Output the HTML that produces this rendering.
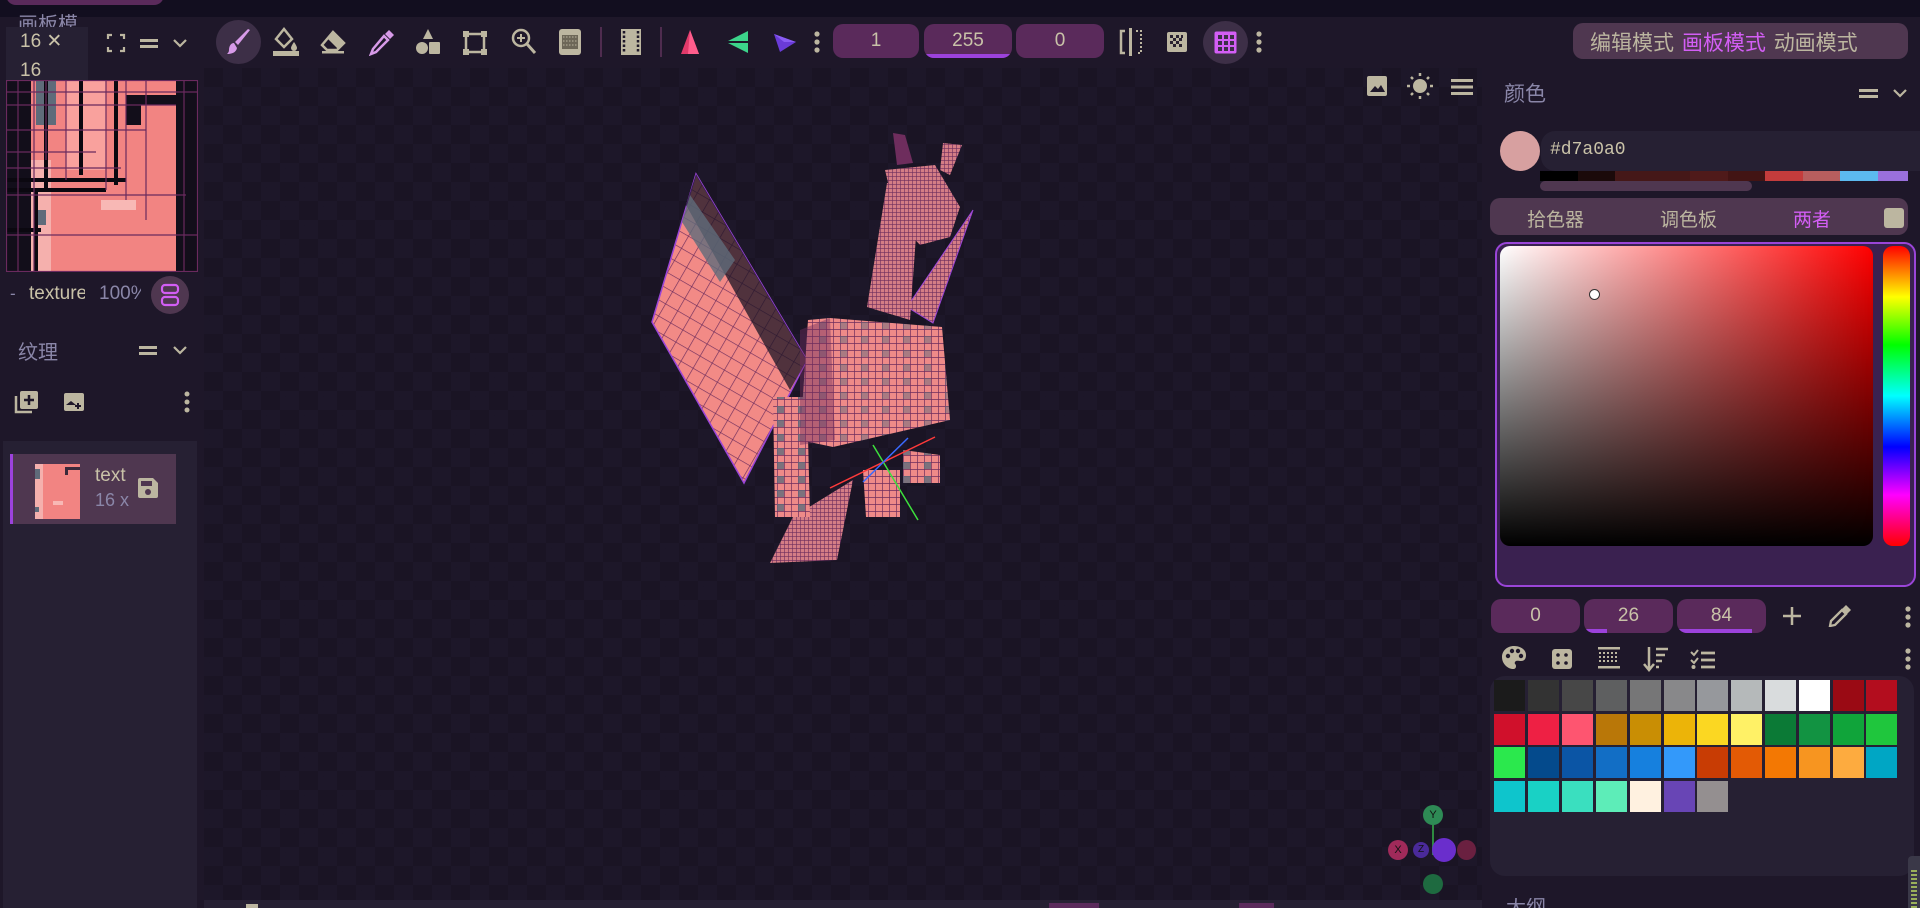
<!DOCTYPE html>
<html><head><meta charset="utf-8">
<style>
*{margin:0;padding:0;box-sizing:border-box}
body{width:1920px;height:908px;overflow:hidden;background:#1e1729;font-family:"Liberation Sans","Noto Sans CJK SC",sans-serif;color:#bcb6a0;position:relative}
.a{position:absolute}
.cj{font-family:"Liberation Sans","Noto Sans CJK SC",sans-serif}
.num{position:absolute;background:#5a2a5b;border-radius:10px;color:#c9c2a8;font-size:19px;text-align:center;overflow:hidden}
.num i{position:absolute;left:0;bottom:0;height:4px;background:#9c42dc}
.ic{position:absolute}
.sw{position:absolute;width:31px;height:31px}
</style></head><body>
<div class="a" style="left:0;top:0;width:1920px;height:17px;background:#120e1f"></div>
<div class="a" style="left:6px;top:-10px;width:158px;height:15px;background:#5a2a5b;border-radius:0 0 10px 10px"></div>
<div class="a" style="left:0;top:17px;width:198px;height:891px;background:#1e1729"></div>
<div class="a cj" style="left:18px;top:10px;font-size:20px;color:#8a86a8;height:17px;overflow:hidden;line-height:30px">画板模</div>
<div class="a" style="left:6px;top:27px;width:82px;height:53px;background:#262033"></div>
<div class="a" style="left:20px;top:30px;font-size:19px;color:#c9c2a8">16 ✕</div>
<div class="a" style="left:20px;top:60px;font-size:19px;color:#c9c2a8">16</div>
<svg class="ic" style="left:106px;top:33px" width="88" height="20" viewBox="0 0 88 20"><path d="M2 6V2h4M14 2h4v4M18 14v4h-4M6 18H2v-4" stroke="#bcb6a0" stroke-width="2.2" fill="none"/><rect x="34" y="6" width="18" height="3" fill="#bcb6a0"/><rect x="34" y="12" width="18" height="3" fill="#bcb6a0"/><path d="M68 7l6 6 6-6" stroke="#bcb6a0" stroke-width="2.2" fill="none"/></svg>
<svg class="a" style="left:6px;top:80px" width="192" height="192" viewBox="0 0 192 192">
<rect width="192" height="192" fill="#120e1a"/>
<rect x="25" y="0" width="145" height="192" fill="#f28482"/>
<rect x="30" y="0" width="20" height="45" fill="#5f6b7a"/>
<rect x="60" y="0" width="40" height="90" fill="#f9a19d"/>
<rect x="120" y="15" width="50" height="30" fill="#120e1a"/>
<rect x="135" y="25" width="35" height="20" fill="#f28482"/>
<rect x="170" y="0" width="22" height="192" fill="#120e1a"/>
<rect x="0" y="0" width="25" height="192" fill="#120e1a"/>
<rect x="25" y="80" width="20" height="112" fill="#f5b0ad"/>
<rect x="28" y="130" width="12" height="15" fill="#5f6b7a"/>
<rect x="95" y="120" width="35" height="10" fill="#f8b8b5"/>
<path d="M40 0v110M75 0v95M110 0v105M0 100h120M0 110h100M0 150h35M30 110v82" stroke="#0b0810" stroke-width="4" fill="none"/>
<g stroke="#6a2a5e" stroke-width="1.2" fill="none"><rect x="0.5" y="0.5" width="191" height="191"/><path d="M0 12h192M0 25h170M0 50h140M0 72h90M0 88h115M0 115h180M0 155h192M12 0v192M28 0v192M40 0v80M60 0v100M100 0v110M120 0v120M140 0v140M178 0v192"/></g>
</svg>
<div class="a" style="left:10px;top:284px;font-size:17px;color:#8a86a8">-</div>
<div class="a" style="left:29px;top:283px;font-size:19px;color:#c9c2a8;width:56px;overflow:hidden;white-space:nowrap">texture</div>
<div class="a" style="left:99px;top:283px;font-size:19px;color:#8a86a8;width:42px;overflow:hidden;white-space:nowrap">100%</div>
<div class="a" style="left:151px;top:276px;width:38px;height:38px;border-radius:50%;background:#4f3750"></div>
<svg class="ic" style="left:160px;top:283px" width="20" height="24"><rect x="2" y="2" width="16" height="8" rx="3" stroke="#d35ef5" stroke-width="2.2" fill="none"/><rect x="2" y="14" width="16" height="8" rx="3" stroke="#d35ef5" stroke-width="2.2" fill="none"/></svg>
<div class="a cj" style="left:18px;top:336px;font-size:20px;color:#8a86a8">纹理</div>
<svg class="ic" style="left:138px;top:340px" width="52" height="20"><rect x="1" y="6" width="18" height="3" fill="#bcb6a0"/><rect x="1" y="12" width="18" height="3" fill="#bcb6a0"/><path d="M36 7l6 6 6-6" stroke="#bcb6a0" stroke-width="2.2" fill="none"/></svg>
<svg class="ic" style="left:14px;top:390px" width="26" height="24"><path d="M2 6v16h16" stroke="#bcb6a0" stroke-width="2.5" fill="none"/><rect x="6" y="1" width="18" height="18" rx="2" fill="#bcb6a0"/><path d="M15 5v10M10 10h10" stroke="#1e1729" stroke-width="2.5"/></svg>
<svg class="ic" style="left:63px;top:392px" width="22" height="20"><rect x="1" y="1" width="20" height="18" rx="2" fill="#bcb6a0"/><path d="M3 13l5-4 5 4" fill="#1e1729"/><path d="M15 11v6M12 14h6" stroke="#1e1729" stroke-width="2"/></svg>
<svg class="ic" style="left:184px;top:391px" width="6" height="22"><circle cx="3" cy="3" r="2.5" fill="#bcb6a0"/><circle cx="3" cy="11" r="2.5" fill="#bcb6a0"/><circle cx="3" cy="19" r="2.5" fill="#bcb6a0"/></svg>
<div class="a" style="left:3px;top:441px;width:194px;height:467px;background:#262033"></div>
<div class="a" style="left:10px;top:454px;width:166px;height:70px;background:#4f3750;border-left:3px solid #9c42dc"></div>
<svg class="a" style="left:35px;top:464px" width="45" height="55"><rect width="45" height="55" fill="#f28482"/><rect x="0" y="0" width="8" height="55" fill="#f5b0ad"/><rect x="0" y="5" width="5" height="10" fill="#5f6b7a"/><rect x="30" y="3" width="15" height="3" fill="#3b2a3a"/><rect x="30" y="3" width="3" height="8" fill="#3b2a3a"/><rect x="18" y="37" width="10" height="4" fill="#f8b8b5"/><rect x="0" y="43" width="4" height="5" fill="#5f6b7a"/></svg>
<div class="a" style="left:95px;top:465px;font-size:19px;color:#c9c2a8">text</div>
<div class="a" style="left:95px;top:490px;font-size:18px;color:#8a86a8">16 x</div>
<svg class="ic" style="left:137px;top:477px" width="22" height="22"><path d="M1 3a2 2 0 0 1 2-2h13l5 5v13a2 2 0 0 1-2 2H3a2 2 0 0 1-2-2z" fill="#bcb6a0"/><rect x="4" y="4" width="11" height="5" fill="#4f3750"/><circle cx="11" cy="15" r="3" fill="#4f3750"/></svg>

<div class="a" style="left:198px;top:17px;width:1284px;height:51px;background:#1e1729"></div>
<div class="a" style="left:216px;top:20px;width:45px;height:44px;border-radius:50%;background:#3d2f47"></div>
<svg class="ic" style="left:226px;top:28px" width="26" height="28"><path d="M24 2L12 17l-3-3L22 1z" fill="#d79ae8"/><path d="M8 15c-3 0-5 3-5 7 0 2-1 3-2 4 4 0 9-1 10-6z" fill="#d79ae8"/></svg>
<svg class="ic" style="left:272px;top:27px" width="28" height="30"><path d="M12 2l-8 10 8 8 8-8z" fill="none" stroke="#bcb6a0" stroke-width="2.5"/><path d="M22 15c0 0-3 4-3 6a3 3 0 0 0 6 0c0-2-3-6-3-6z" fill="#bcb6a0"/><rect x="1" y="24" width="26" height="5" fill="#bcb6a0"/></svg>
<svg class="ic" style="left:320px;top:30px" width="26" height="24"><path d="M13 2l11 11-7 7H7L2 15z" fill="none" stroke="#bcb6a0" stroke-width="2.5"/><path d="M13 2l11 11-6 6-11-11z" fill="#bcb6a0"/><rect x="2" y="21" width="22" height="2.5" fill="#bcb6a0"/></svg>
<svg class="ic" style="left:369px;top:28px" width="26" height="28"><path d="M20 2l5 5-4 4-5-5z" fill="#d79ae8"/><path d="M15 8l4 4L7 24l-5 2 2-5z" fill="none" stroke="#d79ae8" stroke-width="2.5"/></svg>
<svg class="ic" style="left:415px;top:28px" width="26" height="28"><path d="M13 1l5 10H8z" fill="#bcb6a0"/><circle cx="7" cy="20" r="6" fill="#bcb6a0"/><rect x="14" y="14" width="11" height="12" rx="1" fill="#bcb6a0"/></svg>
<svg class="ic" style="left:462px;top:30px" width="26" height="26"><rect x="4" y="4" width="18" height="18" fill="none" stroke="#bcb6a0" stroke-width="2.5"/><rect x="1" y="1" width="6" height="6" fill="#bcb6a0"/><rect x="19" y="1" width="6" height="6" fill="#bcb6a0"/><rect x="1" y="19" width="6" height="6" fill="#bcb6a0"/><rect x="19" y="19" width="6" height="6" fill="#bcb6a0"/></svg>
<svg class="ic" style="left:511px;top:28px" width="26" height="28"><circle cx="10" cy="10" r="8" fill="none" stroke="#bcb6a0" stroke-width="2.5"/><path d="M10 6v8M6 10h8" stroke="#bcb6a0" stroke-width="2"/><path d="M16 16l8 9" stroke="#bcb6a0" stroke-width="3"/></svg>
<svg class="ic" style="left:558px;top:28px" width="24" height="28"><rect x="1" y="1" width="22" height="26" rx="3" fill="#bcb6a0"/><rect x="4" y="7" width="16" height="14" fill="#6d6758"/><path d="M5 9h14M5 13h14M5 17h14" stroke="#bcb6a0" stroke-width="1" stroke-dasharray="1.5 1.5"/></svg>
<div class="a" style="left:600px;top:27px;width:2px;height:30px;background:#4f2c4f"></div>
<svg class="ic" style="left:620px;top:28px" width="22" height="28"><rect x="1" y="1" width="20" height="26" fill="#bcb6a0"/><path d="M4 3v22M18 3v22" stroke="#1e1729" stroke-width="2.5" stroke-dasharray="2.5 2"/><rect x="7" y="2" width="8" height="24" fill="#bcb6a0"/></svg>
<div class="a" style="left:660px;top:27px;width:2px;height:30px;background:#4f2c4f"></div>
<svg class="ic" style="left:678px;top:28px" width="24" height="28"><path d="M12 2L3 26h18z" fill="#e13a6a"/><path d="M12 2L10 26h11z" fill="#ff5d8c"/></svg>
<svg class="ic" style="left:724px;top:30px" width="26" height="24"><path d="M24 1L2 12l22 11z" fill="#3cd48a"/><path d="M24 12H2" stroke="#1e1729" stroke-width="2"/></svg>
<svg class="ic" style="left:772px;top:30px" width="26" height="24"><path d="M2 4l22 8-16 10z" fill="#6a3bd8"/><path d="M2 4l22 8-12 0z" fill="#8a5cf4"/></svg>
<svg class="ic" style="left:814px;top:30px" width="6" height="24"><circle cx="3" cy="4" r="2.6" fill="#bcb6a0"/><circle cx="3" cy="12" r="2.6" fill="#bcb6a0"/><circle cx="3" cy="20" r="2.6" fill="#bcb6a0"/></svg>
<div class="num" style="left:833px;top:24px;width:86px;height:34px;line-height:34px">1</div>
<div class="num" style="left:924px;top:24px;width:88px;height:34px;line-height:34px">255<i style="width:100%"></i></div>
<div class="num" style="left:1016px;top:24px;width:88px;height:34px;line-height:34px">0</div>
<svg class="ic" style="left:1118px;top:28px" width="26" height="28"><path d="M7 3H3v22h4" stroke="#bcb6a0" stroke-width="2.5" fill="none"/><rect x="11" y="0" width="3" height="28" fill="#bcb6a0"/><path d="M18 3h5v22h-5" stroke="#bcb6a0" stroke-width="2" stroke-dasharray="2 2" fill="none"/></svg>
<svg class="ic" style="left:1166px;top:31px" width="22" height="22"><rect x="1" y="1" width="20" height="20" rx="2" fill="#bcb6a0"/><g fill="#2a2230"><rect x="4" y="4" width="3" height="3"/><rect x="10" y="4" width="3" height="3"/><rect x="7" y="7" width="3" height="3"/><rect x="13" y="7" width="3" height="3"/><rect x="4" y="10" width="3" height="3"/><rect x="10" y="10" width="3" height="3"/><rect x="7" y="13" width="3" height="3"/><rect x="13" y="13" width="3" height="3"/><rect x="15" y="4" width="2" height="3"/></g></svg>
<div class="a" style="left:1203px;top:21px;width:45px;height:43px;border-radius:50%;background:#3d2f47"></div>
<svg class="ic" style="left:1213px;top:30px" width="25" height="25"><rect x="1.5" y="1.5" width="22" height="22" rx="2" fill="#d35ef5"/><g fill="#3d2f47"><rect x="5" y="5" width="4" height="4"/><rect x="11" y="5" width="4" height="4"/><rect x="17" y="5" width="4" height="4"/><rect x="5" y="11" width="4" height="4"/><rect x="11" y="11" width="4" height="4"/><rect x="17" y="11" width="4" height="4"/><rect x="5" y="17" width="4" height="4"/><rect x="11" y="17" width="4" height="4"/><rect x="17" y="17" width="4" height="4"/></g></svg>
<svg class="ic" style="left:1256px;top:30px" width="6" height="24"><circle cx="3" cy="4" r="2.6" fill="#bcb6a0"/><circle cx="3" cy="12" r="2.6" fill="#bcb6a0"/><circle cx="3" cy="20" r="2.6" fill="#bcb6a0"/></svg>

<div class="a" style="left:204px;top:68px;width:1278px;height:832px;background-color:#1a1424;background-image:linear-gradient(45deg,#1d1729 25%,transparent 25%,transparent 75%,#1d1729 75%),linear-gradient(45deg,#1d1729 25%,transparent 25%,transparent 75%,#1d1729 75%);background-size:38px 38px;background-position:0 0,19px 19px"></div>
<svg class="ic" style="left:1366px;top:75px" width="22" height="22"><rect x="1" y="1" width="20" height="20" rx="2" fill="#bcb6a0"/><path d="M4 17l5-6 3 3 3-4 4 7z" fill="#1e1729"/></svg>
<svg class="ic" style="left:1407px;top:73px" width="26" height="26"><circle cx="13" cy="13" r="7" fill="#bcb6a0"/><g stroke="#bcb6a0" stroke-width="2.5"><path d="M13 0v3M13 23v3M0 13h3M23 13h3M4 4l2 2M20 20l2 2M4 22l2-2M20 6l2-2"/></g></svg>
<svg class="ic" style="left:1451px;top:78px" width="22" height="18"><rect y="1" width="22" height="3" fill="#bcb6a0"/><rect y="7.5" width="22" height="3" fill="#bcb6a0"/><rect y="14" width="22" height="3" fill="#bcb6a0"/></svg>

<svg class="a" style="left:620px;top:120px" width="420" height="460" viewBox="620 120 420 460">
<defs>
<pattern id="g" width="7" height="7" patternUnits="userSpaceOnUse"><rect width="7" height="7" fill="#ee8a88"/><path d="M0 0h7M0 0v7" stroke="#6e2d5d" stroke-width="1.4"/></pattern>
<pattern id="g2" width="4" height="4" patternUnits="userSpaceOnUse"><rect width="4" height="4" fill="#d47d85"/><path d="M0 0h4M0 0v4" stroke="#6e2d5d" stroke-width="1.2"/></pattern>
<pattern id="w" width="14" height="14" patternUnits="userSpaceOnUse" patternTransform="rotate(30)"><rect width="14" height="14" fill="#f28a86"/><path d="M0 0h14M0 0v14" stroke="#6e2d5d" stroke-width="1.3"/></pattern>
<pattern id="t" width="21" height="14" patternUnits="userSpaceOnUse"><rect width="21" height="14" fill="none"/><rect x="0" y="0" width="7" height="7" fill="#5f6b7a" opacity="0.8"/></pattern>
</defs>
<polygon points="696,174 652,322 744,483 807,360" fill="url(#w)" stroke="#9b45d8" stroke-width="1.5"/>
<polygon points="696,174 686,205 790,390 807,360" fill="#1a1424" opacity="0.75"/>
<polygon points="690,195 682,222 720,282 735,260" fill="#5f6b7a" opacity="0.8"/>
<polygon points="907,307 973,210 933,323" fill="url(#g2)" stroke="#9b45d8" stroke-width="1"/>
<polygon points="770,563 793,517 853,480 837,560" fill="url(#g2)"/>
<polygon points="773,397 807,397 810,517 775,517" fill="url(#g)"/>
<polygon points="773,397 807,397 810,517 775,517" fill="url(#t)"/>
<polygon points="867,307 887,183 920,180 910,320" fill="url(#g2)"/>
<polygon points="885,170 935,165 960,207 950,237 920,245 897,220" fill="url(#g2)"/>
<polygon points="893,133 905,135 913,163 897,165" fill="#6e2d5d"/>
<polygon points="943,143 962,145 950,175 940,170" fill="url(#g2)"/>
<polygon points="808,320 830,318 942,327 950,420 833,447 800,440" fill="url(#g)"/>
<polygon points="808,320 830,318 942,327 950,420 833,447 800,440" fill="url(#t)" opacity="0.6"/>
<polygon points="800,330 830,318 835,440 800,445" fill="#6e2d5d" opacity="0.45"/>
<polygon points="863,470 900,470 900,517 866,517" fill="url(#g)"/>
<polygon points="903,450 940,455 940,483 903,483" fill="url(#g)"/>
<polygon points="903,450 940,455 940,483 903,483" fill="url(#t)"/>
<line x1="873" y1="445" x2="918" y2="520" stroke="#3de03d" stroke-width="1.5"/>
<line x1="830" y1="488" x2="935" y2="437" stroke="#ff3a3a" stroke-width="1.5"/>
<line x1="863" y1="482" x2="908" y2="438" stroke="#3a6aff" stroke-width="1.5"/>
</svg>

<div class="a" style="left:1432px;top:825px;width:2px;height:30px;background:#2e8a40"></div>
<div class="a" style="left:1423px;top:805px;width:20px;height:20px;border-radius:50%;background:#2e8a55;font-size:11px;color:#111;text-align:center;line-height:20px">Y</div>
<div class="a" style="left:1388px;top:840px;width:20px;height:20px;border-radius:50%;background:#a02a5a;font-size:11px;color:#111;text-align:center;line-height:20px">X</div>
<div class="a" style="left:1413px;top:842px;width:16px;height:16px;border-radius:50%;background:#4a2a9a;font-size:10px;color:#111;text-align:center;line-height:16px">Z</div>
<div class="a" style="left:1432px;top:838px;width:24px;height:24px;border-radius:50%;background:#6a2ecc"></div>
<div class="a" style="left:1457px;top:840px;width:19px;height:20px;border-radius:50%;background:#6a2040"></div>
<div class="a" style="left:1423px;top:874px;width:20px;height:20px;border-radius:50%;background:#1e6a40"></div>
<div class="a" style="left:204px;top:900px;width:1278px;height:8px;background:#262033"></div>
<div class="a" style="left:246px;top:904px;width:12px;height:4px;background:#bcb6a0"></div>
<div class="a" style="left:1049px;top:903px;width:50px;height:5px;background:#5a2a5b"></div>
<div class="a" style="left:1239px;top:903px;width:35px;height:5px;background:#5a2a5b"></div>

<div class="a" style="left:1482px;top:17px;width:438px;height:891px;background:#1e1729"></div>
<div class="a" style="left:1573px;top:23px;width:335px;height:36px;background:#4f3750;border-radius:10px"></div>
<div class="a cj" style="left:1590px;top:27px;font-size:21px;color:#bcb6a0;white-space:nowrap">编辑模式 <span style="color:#d35ef5;margin-left:2px">画板模式</span> <span style="margin-left:2px">动画模式</span></div>
<div class="a cj" style="left:1504px;top:78px;font-size:21px;color:#8a86a8">颜色</div>
<svg class="ic" style="left:1858px;top:84px" width="52" height="20"><rect x="1" y="5" width="19" height="3" fill="#bcb6a0"/><rect x="1" y="11" width="19" height="3" fill="#bcb6a0"/><path d="M36 6l6 6 6-6" stroke="#bcb6a0" stroke-width="2.2" fill="none"/></svg>
<div class="a" style="left:1500px;top:131px;width:40px;height:40px;border-radius:50%;background:#d7a0a0"></div>
<div class="a" style="left:1541px;top:131px;width:379px;height:40px;background:#262033;border-radius:14px 0 0 14px"></div>
<div class="a" style="left:1550px;top:140px;font-family:'Liberation Mono',monospace;font-size:18px;color:#c9c2a8">#d7a0a0</div>
<div class="a" style="left:1540px;top:171px;width:368px;height:10px;display:flex">
<div style="flex:38;background:#000"></div><div style="flex:37;background:#1b0a0a"></div><div style="flex:75;background:#451818"></div><div style="flex:38;background:#4f1a1a"></div><div style="flex:37;background:#421414"></div><div style="flex:38;background:#c43c3c"></div><div style="flex:37;background:#b85e5e"></div><div style="flex:38;background:#5cbaf0"></div><div style="flex:30;background:#9a70dc"></div></div>
<div class="a" style="left:1540px;top:181px;width:212px;height:10px;background:#4f3750;border-radius:5px"></div>
<div class="a" style="left:1490px;top:198px;width:418px;height:37px;background:#4f3750;border-radius:10px"></div>
<div class="a cj" style="left:1527px;top:205px;font-size:19px;color:#bcb6a0">拾色器</div>
<div class="a cj" style="left:1660px;top:205px;font-size:19px;color:#bcb6a0">调色板</div>
<div class="a cj" style="left:1793px;top:205px;font-size:19px;color:#d35ef5">两者</div>
<div class="a" style="left:1884px;top:208px;width:20px;height:20px;background:#bcb6a0;border-radius:3px"></div>
<div class="a" style="left:1495px;top:242px;width:421px;height:345px;background:#3a2150;border:2px solid #9a45d8;border-radius:12px"></div>
<div class="a" style="left:1500px;top:246px;width:373px;height:300px;border-radius:10px;background:linear-gradient(to bottom,transparent,#000),linear-gradient(to right,#fff,#f00)"></div>
<div class="a" style="left:1883px;top:246px;width:27px;height:300px;border-radius:10px;background:linear-gradient(to bottom,#f00,#ff0 17%,#0f0 33%,#0ff 50%,#00f 67%,#f0f 83%,#f00)"></div>
<div class="a" style="left:1589px;top:289px;width:11px;height:11px;border-radius:50%;background:#fff;border:1.5px solid #333"></div>
<div class="num" style="left:1491px;top:599px;width:89px;height:34px;line-height:34px">0</div>
<div class="num" style="left:1584px;top:599px;width:89px;height:34px;line-height:34px">26<i style="width:23px"></i></div>
<div class="num" style="left:1677px;top:599px;width:89px;height:34px;line-height:34px">84<i style="width:75px"></i></div>
<svg class="ic" style="left:1782px;top:606px" width="20" height="20"><path d="M10 1v18M1 10h18" stroke="#bcb6a0" stroke-width="2.5"/></svg>
<svg class="ic" style="left:1828px;top:603px" width="24" height="24"><path d="M18 2l5 5-4 4-5-5z" fill="#bcb6a0"/><path d="M14 7l4 4L7 22l-5 1 1-5z" fill="none" stroke="#bcb6a0" stroke-width="2.3"/></svg>
<svg class="ic" style="left:1905px;top:605px" width="6" height="24"><circle cx="3" cy="4" r="2.6" fill="#bcb6a0"/><circle cx="3" cy="12" r="2.6" fill="#bcb6a0"/><circle cx="3" cy="20" r="2.6" fill="#bcb6a0"/></svg>
<svg class="ic" style="left:1501px;top:645px" width="26" height="26"><path d="M13 1C6 1 1 6 1 12c0 7 6 12 11 12 2 0 3-1 3-3 0-2-2-2-1-4 1-2 4-1 6-1 4 0 5-3 5-6C25 5 20 1 13 1z" fill="#bcb6a0"/><circle cx="7" cy="11" r="2.2" fill="#1e1729"/><circle cx="11" cy="6" r="2.2" fill="#1e1729"/><circle cx="17" cy="6" r="2.2" fill="#1e1729"/><circle cx="20" cy="11" r="2.2" fill="#1e1729"/></svg>
<svg class="ic" style="left:1551px;top:648px" width="22" height="22"><rect x="1" y="1" width="20" height="20" rx="3" fill="#bcb6a0"/><g fill="#1e1729"><circle cx="7" cy="7" r="1.8"/><circle cx="15" cy="7" r="1.8"/><circle cx="7" cy="15" r="1.8"/><circle cx="15" cy="15" r="1.8"/></g></svg>
<svg class="ic" style="left:1597px;top:646px" width="24" height="24"><rect x="1" y="1" width="22" height="2.5" fill="#bcb6a0"/><rect x="1" y="20" width="22" height="2.5" fill="#bcb6a0"/><path d="M2 7h20M2 11h20M2 15h20" stroke="#bcb6a0" stroke-width="2" stroke-dasharray="2 2"/></svg>
<svg class="ic" style="left:1643px;top:646px" width="26" height="26"><path d="M6 1v22M1 18l5 6 5-6" stroke="#bcb6a0" stroke-width="2.5" fill="none"/><path d="M13 3h12M13 9h9M13 15h6M13 21h3" stroke="#bcb6a0" stroke-width="2.5"/></svg>
<svg class="ic" style="left:1690px;top:648px" width="26" height="22"><path d="M1 4l3 3 4-5M1 12l3 3 4-5" stroke="#bcb6a0" stroke-width="2" fill="none"/><circle cx="3.5" cy="19" r="2" fill="#bcb6a0"/><path d="M11 5h14M11 12h14M11 19h14" stroke="#bcb6a0" stroke-width="2.8"/></svg>
<svg class="ic" style="left:1905px;top:647px" width="6" height="24"><circle cx="3" cy="4" r="2.6" fill="#bcb6a0"/><circle cx="3" cy="12" r="2.6" fill="#bcb6a0"/><circle cx="3" cy="20" r="2.6" fill="#bcb6a0"/></svg>
<div class="a" style="left:1490px;top:676px;width:424px;height:200px;background:#262033;border-radius:15px"></div>
<div class="a" style="left:1494px;top:680px;width:410px;height:140px">
<div class="sw" style="left:0;top:0;background:#1b1b1b"></div><div class="sw" style="left:34px;top:0;background:#333"></div><div class="sw" style="left:68px;top:0;background:#474747"></div><div class="sw" style="left:102px;top:0;background:#5e5f60"></div><div class="sw" style="left:136px;top:0;background:#767677"></div><div class="sw" style="left:170px;top:0;background:#88888a"></div><div class="sw" style="left:203px;top:0;background:#96989c"></div><div class="sw" style="left:237px;top:0;background:#b5b9ba"></div><div class="sw" style="left:271px;top:0;background:#d9dcdd"></div><div class="sw" style="left:305px;top:0;background:#fff"></div><div class="sw" style="left:339px;top:0;background:#9a0a14"></div><div class="sw" style="left:372px;top:0;background:#b30d1e"></div>
<div class="sw" style="left:0;top:34px;background:#d0102b"></div><div class="sw" style="left:34px;top:34px;background:#ee2044"></div><div class="sw" style="left:68px;top:34px;background:#fe5570"></div><div class="sw" style="left:102px;top:34px;background:#b97708"></div><div class="sw" style="left:136px;top:34px;background:#c98e04"></div><div class="sw" style="left:170px;top:34px;background:#ecb408"></div><div class="sw" style="left:203px;top:34px;background:#fbd722"></div><div class="sw" style="left:237px;top:34px;background:#fff166"></div><div class="sw" style="left:271px;top:34px;background:#0b7a36"></div><div class="sw" style="left:305px;top:34px;background:#129342"></div><div class="sw" style="left:339px;top:34px;background:#10a43a"></div><div class="sw" style="left:372px;top:34px;background:#1fc63d"></div>
<div class="sw" style="left:0;top:67px;background:#2be84d"></div><div class="sw" style="left:34px;top:67px;background:#044a8c"></div><div class="sw" style="left:68px;top:67px;background:#0b55a5"></div><div class="sw" style="left:102px;top:67px;background:#126ec5"></div><div class="sw" style="left:136px;top:67px;background:#1680de"></div><div class="sw" style="left:170px;top:67px;background:#3399fa"></div><div class="sw" style="left:203px;top:67px;background:#c83c04"></div><div class="sw" style="left:237px;top:67px;background:#e35a05"></div><div class="sw" style="left:271px;top:67px;background:#f37803"></div><div class="sw" style="left:305px;top:67px;background:#f79520"></div><div class="sw" style="left:339px;top:67px;background:#fdab3f"></div><div class="sw" style="left:372px;top:67px;background:#00a6c4"></div>
<div class="sw" style="left:0;top:101px;background:#0ec5cc"></div><div class="sw" style="left:34px;top:101px;background:#19d1c5"></div><div class="sw" style="left:68px;top:101px;background:#3adfbf"></div><div class="sw" style="left:102px;top:101px;background:#5dedb8"></div><div class="sw" style="left:136px;top:101px;background:#fff1e0"></div><div class="sw" style="left:170px;top:101px;background:#6845b5"></div><div class="sw" style="left:203px;top:101px;background:#948f90"></div>
</div>
<div class="a cj" style="left:1506px;top:898px;font-size:20px;color:#8a86a8;line-height:20px;height:10px;overflow:hidden">大纲</div>
<div class="a" style="left:1908px;top:856px;width:12px;height:52px;background:#3a3848;border-radius:4px 0 0 0"></div>
<div class="a" style="left:1911px;top:870px;width:6px;height:38px;background:repeating-linear-gradient(#9ab05a 0 2px,#3a3848 2px 4px)"></div>
</body></html>
